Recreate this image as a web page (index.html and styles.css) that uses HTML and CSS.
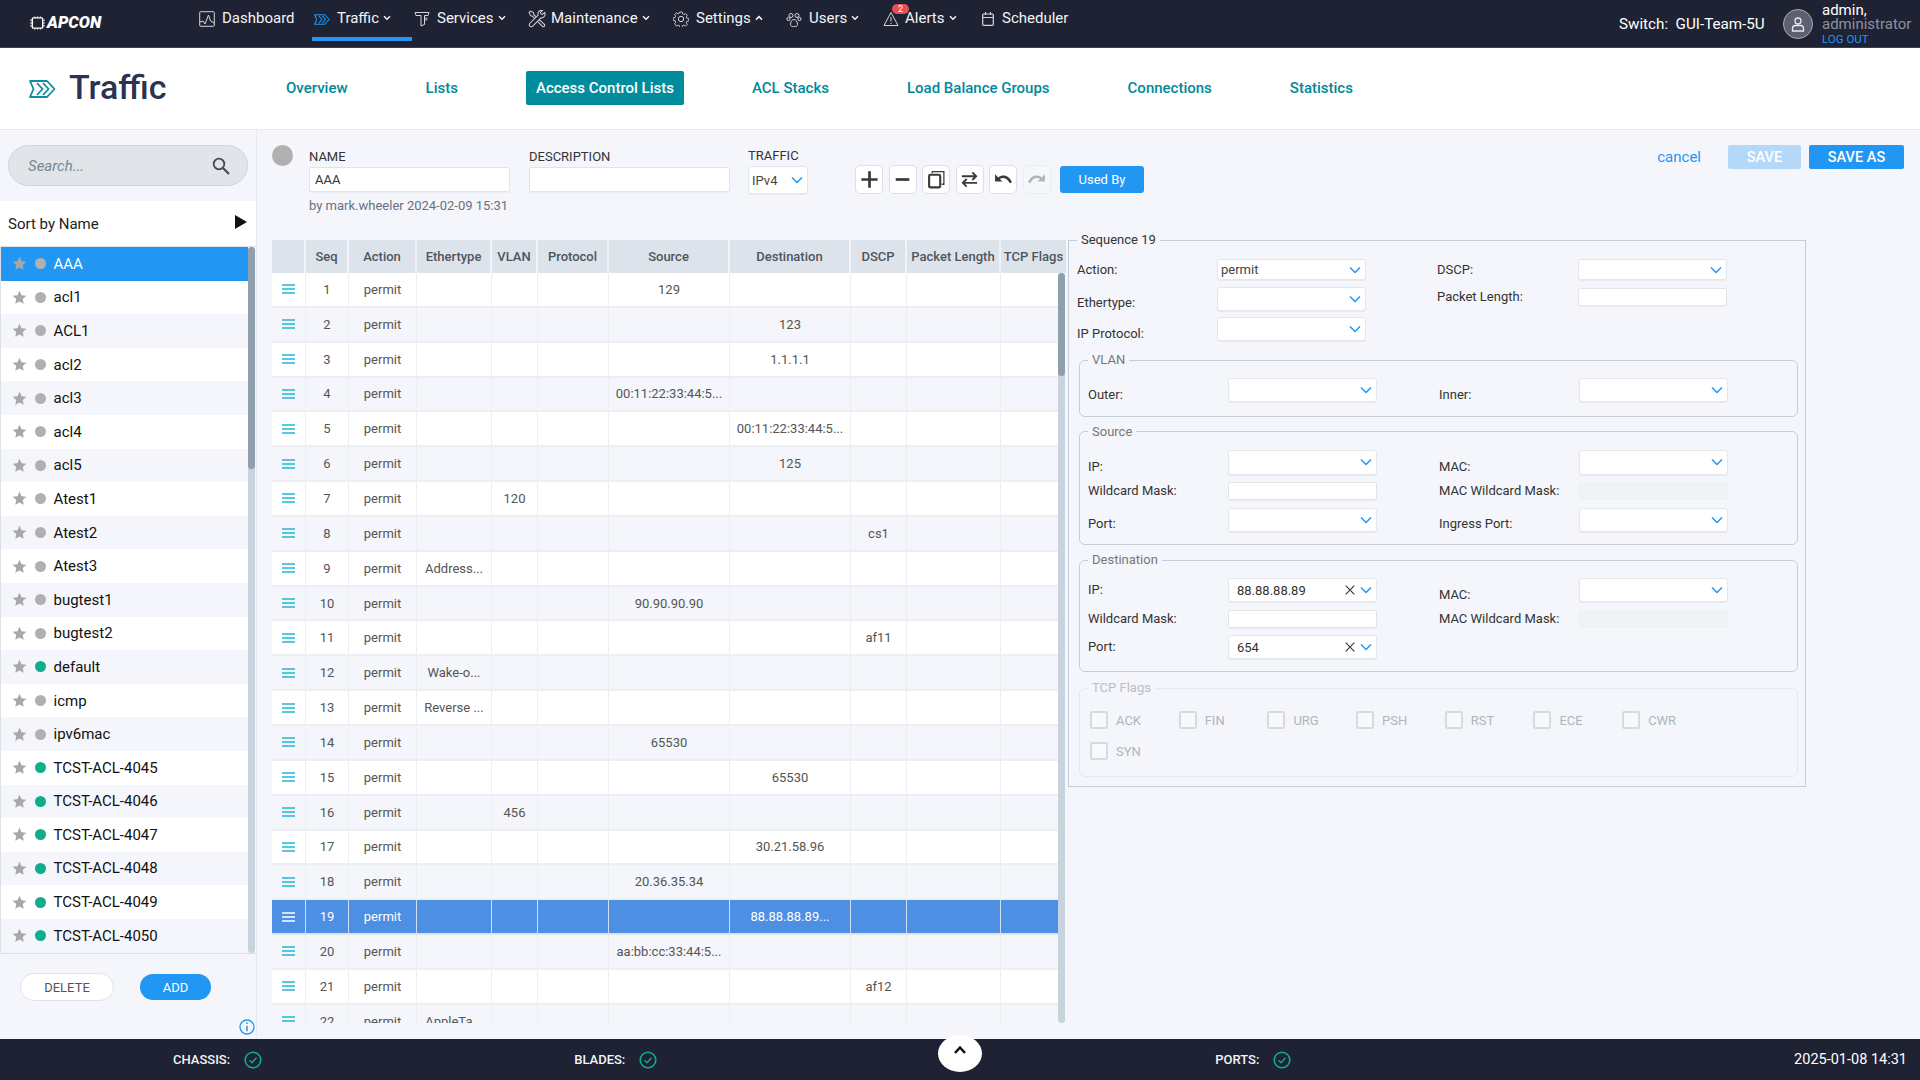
FILE: index.html
```html
<!DOCTYPE html>
<html lang="en">
<head>
<meta charset="utf-8">
<title>Traffic - Access Control Lists</title>
<link rel="stylesheet" href="styles.css">
</head>
<body>
<svg class="defs" aria-hidden="true">
  <symbol id="chev" viewBox="0 0 12 8"><path d="M1 1.500l5 5 5-5" fill="none" stroke="currentColor" stroke-width="1.500"/></symbol>
  <symbol id="nchev" viewBox="0 0 8 6"><path d="M1 1.200l3 3 3-3" fill="none" stroke="currentColor" stroke-width="1.500"/></symbol>
  <symbol id="nchevup" viewBox="0 0 8 6"><path d="M1 4.600l3-3 3 3" fill="none" stroke="currentColor" stroke-width="1.500"/></symbol>
  <symbol id="star" viewBox="0 0 16 16"><path d="M8 .8l2.200 4.700 5.100.6-3.800 3.500 1 5.100L8 12.200 3.500 14.700l1-5.100L.7 6.100l5.100-.6z" fill="currentColor"/></symbol>
  <symbol id="grip" viewBox="0 0 13 10"><path d="M0 1h13M0 5h13M0 9h13" stroke="currentColor" stroke-width="1.500"/></symbol>
  <symbol id="traffic" viewBox="0 0 27 18"><path d="M1 1h17l7.500 8-7.500 8H1l3.500-8z" fill="none" stroke="currentColor" stroke-width="1.800" stroke-linejoin="round"/><path d="M8 3l5.500 6L8 15M14 3l5.500 6L14 15" fill="none" stroke="currentColor" stroke-width="1.800"/></symbol>
  <symbol id="ok" viewBox="0 0 18 18"><circle cx="9" cy="9" r="7.800" fill="none" stroke="currentColor" stroke-width="1.600"/><path d="M5.500 9.200l2.500 2.500 4.500-5" fill="none" stroke="currentColor" stroke-width="1.300"/></symbol>
  <symbol id="clear" viewBox="0 0 10 10"><path d="M.7.7l8.600 8.600M9.300.7L.7 9.300" fill="none" stroke="currentColor" stroke-width="1.100"/></symbol>
</svg>

<header class="topnav">
  <div class="logo">
    <svg class="chip" viewBox="0 0 16 14"><rect x="2.500" y="1.500" width="11" height="11" rx="1" fill="none" stroke="currentColor" stroke-width="1.500"/><path d="M0 4h2M0 7h2M0 10h2M14 4h2M14 7h2M14 10h2M5 0v1.500M8 0v1.500M11 0v1.500M5 12.500V14M8 12.500V14M11 12.500V14" stroke="currentColor"/></svg>
    <span>APCON</span>
  </div>
  <nav class="navitems">
    <a class="nitem n-dash"><svg class="nicon" viewBox="0 0 16 16"><rect x=".7" y=".7" width="14.600" height="14.600" rx="1" fill="none" stroke="currentColor"/><path d="M1 11l3-1 2 3 3.500-9 2 6 3.500 2" fill="none" stroke="currentColor"/></svg>Dashboard</a>
    <a class="nitem n-traffic active"><svg class="nicon blue"><use href="#traffic"/></svg>Traffic<svg class="nchev"><use href="#nchev"/></svg></a>
    <a class="nitem n-serv"><svg class="nicon" viewBox="0 0 16 16"><path d="M1 1.500h14l-1 3H10.500v9L7 15V4.500H2z" fill="none" stroke="currentColor"/><circle cx="12" cy="8" r="1.200" fill="none" stroke="currentColor" stroke-width=".8"/></svg>Services<svg class="nchev"><use href="#nchev"/></svg></a>
    <a class="nitem n-maint"><svg class="nicon" viewBox="0 0 16 16"><path d="M1 2.200L2.200 1l2.600 1.300.4 1.900L14.500 12.800a1.200 1.200 0 0 1-1.700 1.700L3.900 5.500 2.200 5z" fill="none" stroke="currentColor" stroke-width=".9"/><path d="M14.800 2.200l-2 1.700-1.300-.4-.4-1.300 1.800-1.900A3.300 3.300 0 0 0 9 4.500L1.500 12a1.800 1.800 0 0 0 2.500 2.500L11.500 7a3.300 3.300 0 0 0 3.300-4.800z" fill="#1f2233" stroke="currentColor" stroke-width=".9"/></svg>Maintenance<svg class="nchev"><use href="#nchev"/></svg></a>
    <a class="nitem n-set"><svg class="nicon" viewBox="0 0 16 16"><circle cx="8" cy="8" r="2.700" fill="none" stroke="currentColor"/><path d="M6.800 1h2.400l.4 1.900 1.300.6 1.700-1 1.700 1.700-1 1.700.6 1.300 1.900.4v2.400l-1.900.4-.6 1.300 1 1.700-1.700 1.700-1.700-1-1.300.6-.4 1.900H6.800l-.4-1.900-1.300-.6-1.700 1L1.700 12.700l1-1.700-.6-1.300L.2 9.300V6.900l1.900-.4.600-1.300-1-1.700 1.700-1.700 1.700 1 1.300-.6z" fill="none" stroke="currentColor" stroke-width=".9"/></svg>Settings<svg class="nchev"><use href="#nchevup"/></svg></a>
    <a class="nitem n-users"><svg class="nicon" viewBox="0 0 16 16"><circle cx="5" cy="4.500" r="2" fill="none" stroke="currentColor"/><circle cx="11" cy="4.500" r="2" fill="none" stroke="currentColor"/><circle cx="2.500" cy="8" r="1.600" fill="none" stroke="currentColor"/><circle cx="13.500" cy="8" r="1.600" fill="none" stroke="currentColor"/><path d="M4.500 13.500c0-3 1.500-5 3.500-5s3.500 2 3.500 5-7 3-7 0z" fill="none" stroke="currentColor"/></svg>Users<svg class="nchev"><use href="#nchev"/></svg></a>
    <a class="nitem n-alerts"><svg class="nicon" viewBox="0 0 16 16"><path d="M8 1.500L15 14.500H1z" fill="none" stroke="currentColor"/><path d="M8 6v4.500M8 11.800v1.200" stroke="currentColor"/></svg><span class="badge">2</span>Alerts<svg class="nchev"><use href="#nchev"/></svg></a>
    <a class="nitem n-sched"><svg class="nicon small" viewBox="0 0 12 14"><rect x=".7" y="2" width="10.600" height="11.300" rx="1" fill="none" stroke="currentColor" stroke-width="1.200"/><path d="M1 5.500h10M3.500 0v3M8.500 0v3" stroke="currentColor" stroke-width="1.200"/></svg>Scheduler</a>
  </nav>
  <div class="switch">Switch:  GUI-Team-5U</div>
  <div class="avatar"><svg viewBox="0 0 18 18"><circle cx="9" cy="6" r="3" fill="none" stroke="currentColor" stroke-width="1.300"/><path d="M3.500 16v-2.500c0-2 1.500-3 3-3h5c1.500 0 3 1 3 3V16z" fill="none" stroke="currentColor" stroke-width="1.300"/></svg></div>
  <div class="user"><div>admin,</div><div class="role">administrator</div><div class="logout">LOG OUT</div></div>
</header>

<section class="subnav">
  <div class="titlewrap"><svg class="titleicon"><use href="#traffic"/></svg><h1>Traffic</h1></div>
  <div class="tabs">
    <a class="tab">Overview</a>
    <a class="tab">Lists</a>
    <a class="tab current">Access Control Lists</a>
    <a class="tab">ACL Stacks</a>
    <a class="tab">Load Balance Groups</a>
    <a class="tab">Connections</a>
    <a class="tab">Statistics</a>
  </div>
</section>

<main class="main">
  <aside class="sidebar">
    <div class="search"><span>Search...</span><svg viewBox="0 0 18 18"><circle cx="7" cy="7" r="5.300" fill="none" stroke="currentColor" stroke-width="1.800"/><path d="M11 11l6 6" stroke="currentColor" stroke-width="2.200"/></svg></div>
    <div class="sort"><span>Sort by Name</span><i class="tri"></i></div>
    <div class="listwrap">
      <ul class="acl">
        <li class="sel"><svg class="star"><use href="#star"/></svg><b class="dot"></b>AAA</li>
        <li><svg class="star"><use href="#star"/></svg><b class="dot"></b>acl1</li>
        <li><svg class="star"><use href="#star"/></svg><b class="dot"></b>ACL1</li>
        <li><svg class="star"><use href="#star"/></svg><b class="dot"></b>acl2</li>
        <li><svg class="star"><use href="#star"/></svg><b class="dot"></b>acl3</li>
        <li><svg class="star"><use href="#star"/></svg><b class="dot"></b>acl4</li>
        <li><svg class="star"><use href="#star"/></svg><b class="dot"></b>acl5</li>
        <li><svg class="star"><use href="#star"/></svg><b class="dot"></b>Atest1</li>
        <li><svg class="star"><use href="#star"/></svg><b class="dot"></b>Atest2</li>
        <li><svg class="star"><use href="#star"/></svg><b class="dot"></b>Atest3</li>
        <li><svg class="star"><use href="#star"/></svg><b class="dot"></b>bugtest1</li>
        <li><svg class="star"><use href="#star"/></svg><b class="dot"></b>bugtest2</li>
        <li><svg class="star"><use href="#star"/></svg><b class="dot on"></b>default</li>
        <li><svg class="star"><use href="#star"/></svg><b class="dot"></b>icmp</li>
        <li><svg class="star"><use href="#star"/></svg><b class="dot"></b>ipv6mac</li>
        <li><svg class="star"><use href="#star"/></svg><b class="dot on"></b>TCST-ACL-4045</li>
        <li><svg class="star"><use href="#star"/></svg><b class="dot on"></b>TCST-ACL-4046</li>
        <li><svg class="star"><use href="#star"/></svg><b class="dot on"></b>TCST-ACL-4047</li>
        <li><svg class="star"><use href="#star"/></svg><b class="dot on"></b>TCST-ACL-4048</li>
        <li><svg class="star"><use href="#star"/></svg><b class="dot on"></b>TCST-ACL-4049</li>
        <li><svg class="star"><use href="#star"/></svg><b class="dot on"></b>TCST-ACL-4050</li>
      </ul>
      <div class="sbar side"><div class="thumb"></div></div>
    </div>
    <div class="sideactions"><button class="pill ghost">DELETE</button><button class="pill primary">ADD</button></div>
    <svg class="info" viewBox="0 0 16 16"><circle cx="8" cy="8" r="7" fill="none" stroke="currentColor" stroke-width="1.300"/><path d="M8 3.500v1.600M8 6.800v5.500" stroke="currentColor" stroke-width="1.500"/></svg>
  </aside>

  <div class="editor">
    <div class="formbar">
      <i class="statusdot"></i>
      <div class="field"><label>NAME</label><div class="input txt">AAA</div><div class="meta">by mark.wheeler 2024-02-09 15:31</div></div>
      <div class="field desc"><label>DESCRIPTION</label><div class="input txt"></div></div>
      <div class="field traffic"><label>TRAFFIC</label><div class="sel-box tall"><span>IPv4</span><svg class="chev"><use href="#chev"/></svg></div></div>
      <div class="tools">
        <button class="tool"><svg viewBox="0 0 14 14"><path d="M7 1v12M1 7h12" stroke="currentColor" stroke-width="2"/></svg></button>
        <button class="tool"><svg viewBox="0 0 14 14"><path d="M2 7h10" stroke="currentColor" stroke-width="2"/></svg></button>
        <button class="tool"><svg viewBox="0 0 18 18"><rect x="2" y="4.500" width="10.500" height="12" rx="1.200" fill="none" stroke="currentColor" stroke-width="2"/><path d="M5 3V1.500h11v12h-2" fill="none" stroke="currentColor" stroke-width="1.200"/></svg></button>
        <button class="tool"><svg viewBox="0 0 20 18"><path d="M2 5.500h15M13 1.500l4 4-4 4M18 12.500H3M7 8.500l-4 4 4 4" fill="none" stroke="currentColor" stroke-width="2"/></svg></button>
        <button class="tool"><svg viewBox="0 0 18 14"><path d="M1 2v7h7L5.500 6.500c3-2 7-1 9.500 4l2-.8C14.500 3 8.500 1.500 4 5z" fill="currentColor"/></svg></button>
        <button class="tool off"><svg viewBox="0 0 18 14"><path d="M17 2v7h-7l2.500-2.500c-3-2-7-1-9.500 4l-2-.8C3.500 3 9.500 1.500 14 5z" fill="currentColor"/></svg></button>
        <button class="usedby">Used By</button>
      </div>
      <div class="saves"><a class="cancel">cancel</a><button class="savebtn dim">SAVE</button><button class="savebtn">SAVE AS</button></div>
    </div>

    <div class="workarea">
      <div class="grid">
        <div class="tr th"><span></span><span>Seq</span><span>Action</span><span>Ethertype</span><span>VLAN</span><span>Protocol</span><span>Source</span><span>Destination</span><span>DSCP</span><span>Packet Length</span><span>TCP Flags</span></div>
        <div class="tbody">
          <div class="tr"><span class="g"><svg><use href="#grip"/></svg></span><span>1</span><span>permit</span><span></span><span></span><span></span><span>129</span><span></span><span></span><span></span><span></span></div>
          <div class="tr"><span class="g"><svg><use href="#grip"/></svg></span><span>2</span><span>permit</span><span></span><span></span><span></span><span></span><span>123</span><span></span><span></span><span></span></div>
          <div class="tr"><span class="g"><svg><use href="#grip"/></svg></span><span>3</span><span>permit</span><span></span><span></span><span></span><span></span><span>1.1.1.1</span><span></span><span></span><span></span></div>
          <div class="tr"><span class="g"><svg><use href="#grip"/></svg></span><span>4</span><span>permit</span><span></span><span></span><span></span><span>00:11:22:33:44:5...</span><span></span><span></span><span></span><span></span></div>
          <div class="tr"><span class="g"><svg><use href="#grip"/></svg></span><span>5</span><span>permit</span><span></span><span></span><span></span><span></span><span>00:11:22:33:44:5...</span><span></span><span></span><span></span></div>
          <div class="tr"><span class="g"><svg><use href="#grip"/></svg></span><span>6</span><span>permit</span><span></span><span></span><span></span><span></span><span>125</span><span></span><span></span><span></span></div>
          <div class="tr"><span class="g"><svg><use href="#grip"/></svg></span><span>7</span><span>permit</span><span></span><span>120</span><span></span><span></span><span></span><span></span><span></span><span></span></div>
          <div class="tr"><span class="g"><svg><use href="#grip"/></svg></span><span>8</span><span>permit</span><span></span><span></span><span></span><span></span><span></span><span>cs1</span><span></span><span></span></div>
          <div class="tr"><span class="g"><svg><use href="#grip"/></svg></span><span>9</span><span>permit</span><span>Address...</span><span></span><span></span><span></span><span></span><span></span><span></span><span></span></div>
          <div class="tr"><span class="g"><svg><use href="#grip"/></svg></span><span>10</span><span>permit</span><span></span><span></span><span></span><span>90.90.90.90</span><span></span><span></span><span></span><span></span></div>
          <div class="tr"><span class="g"><svg><use href="#grip"/></svg></span><span>11</span><span>permit</span><span></span><span></span><span></span><span></span><span></span><span>af11</span><span></span><span></span></div>
          <div class="tr"><span class="g"><svg><use href="#grip"/></svg></span><span>12</span><span>permit</span><span>Wake-o...</span><span></span><span></span><span></span><span></span><span></span><span></span><span></span></div>
          <div class="tr"><span class="g"><svg><use href="#grip"/></svg></span><span>13</span><span>permit</span><span>Reverse ...</span><span></span><span></span><span></span><span></span><span></span><span></span><span></span></div>
          <div class="tr"><span class="g"><svg><use href="#grip"/></svg></span><span>14</span><span>permit</span><span></span><span></span><span></span><span>65530</span><span></span><span></span><span></span><span></span></div>
          <div class="tr"><span class="g"><svg><use href="#grip"/></svg></span><span>15</span><span>permit</span><span></span><span></span><span></span><span></span><span>65530</span><span></span><span></span><span></span></div>
          <div class="tr"><span class="g"><svg><use href="#grip"/></svg></span><span>16</span><span>permit</span><span></span><span>456</span><span></span><span></span><span></span><span></span><span></span><span></span></div>
          <div class="tr"><span class="g"><svg><use href="#grip"/></svg></span><span>17</span><span>permit</span><span></span><span></span><span></span><span></span><span>30.21.58.96</span><span></span><span></span><span></span></div>
          <div class="tr"><span class="g"><svg><use href="#grip"/></svg></span><span>18</span><span>permit</span><span></span><span></span><span></span><span>20.36.35.34</span><span></span><span></span><span></span><span></span></div>
          <div class="tr picked"><span class="g"><svg><use href="#grip"/></svg></span><span>19</span><span>permit</span><span></span><span></span><span></span><span></span><span>88.88.88.89...</span><span></span><span></span><span></span></div>
          <div class="tr"><span class="g"><svg><use href="#grip"/></svg></span><span>20</span><span>permit</span><span></span><span></span><span></span><span>aa:bb:cc:33:44:5...</span><span></span><span></span><span></span><span></span></div>
          <div class="tr"><span class="g"><svg><use href="#grip"/></svg></span><span>21</span><span>permit</span><span></span><span></span><span></span><span></span><span></span><span>af12</span><span></span><span></span></div>
          <div class="tr"><span class="g"><svg><use href="#grip"/></svg></span><span>22</span><span>permit</span><span>AppleTa...</span><span></span><span></span><span></span><span></span><span></span><span></span><span></span></div>
          <div class="sbar body"><div class="thumb"></div></div>
        </div>
      </div>

      <fieldset class="seq">
        <legend>Sequence 19</legend>
        <div class="seqgrid">
          <span class="lb">Action:</span><div class="sel-box"><span>permit</span><svg class="chev"><use href="#chev"/></svg></div><span></span>
          <span class="lb">DSCP:</span><div class="sel-box"><svg class="chev"><use href="#chev"/></svg></div>
          <span class="lb low">Ethertype:</span><div class="sel-box"><svg class="chev"><use href="#chev"/></svg></div><span></span>
          <span class="lb top">Packet Length:</span><div class="input thin"></div>
          <span class="lb low">IP Protocol:</span><div class="sel-box"><svg class="chev"><use href="#chev"/></svg></div>
        </div>

        <fieldset class="grp g-vlan">
          <legend>VLAN</legend>
          <div class="grpgrid">
            <span class="lb low">Outer:</span><div class="sel-box"><svg class="chev"><use href="#chev"/></svg></div><span></span>
            <span class="lb low">Inner:</span><div class="sel-box"><svg class="chev"><use href="#chev"/></svg></div>
          </div>
        </fieldset>

        <fieldset class="grp g-src">
          <legend>Source</legend>
          <div class="grpgrid three">
            <span class="lb low">IP:</span><div class="sel-box"><svg class="chev"><use href="#chev"/></svg></div><span></span>
            <span class="lb low">MAC:</span><div class="sel-box"><svg class="chev"><use href="#chev"/></svg></div>
            <span class="lb">Wildcard Mask:</span><div class="input"></div><span></span>
            <span class="lb">MAC Wildcard Mask:</span><div class="input disabled"></div>
            <span class="lb low">Port:</span><div class="sel-box"><svg class="chev"><use href="#chev"/></svg></div><span></span>
            <span class="lb low">Ingress Port:</span><div class="sel-box"><svg class="chev"><use href="#chev"/></svg></div>
          </div>
        </fieldset>

        <fieldset class="grp g-dst">
          <legend>Destination</legend>
          <div class="grpgrid three dst">
            <span class="lb">IP:</span><div class="sel-box val"><span>88.88.88.89</span><svg class="clr"><use href="#clear"/></svg><svg class="chev"><use href="#chev"/></svg></div><span></span>
            <span class="lb low">MAC:</span><div class="sel-box"><svg class="chev"><use href="#chev"/></svg></div>
            <span class="lb">Wildcard Mask:</span><div class="input"></div><span></span>
            <span class="lb">MAC Wildcard Mask:</span><div class="input disabled"></div>
            <span class="lb">Port:</span><div class="sel-box val"><span>654</span><svg class="clr"><use href="#clear"/></svg><svg class="chev"><use href="#chev"/></svg></div>
          </div>
        </fieldset>

        <fieldset class="grp g-tcp">
          <legend>TCP Flags</legend>
          <div class="flags">
            <label class="flag"><i></i>ACK</label><label class="flag"><i></i>FIN</label><label class="flag"><i></i>URG</label><label class="flag"><i></i>PSH</label><label class="flag"><i></i>RST</label><label class="flag"><i></i>ECE</label><label class="flag"><i></i>CWR</label><label class="flag"><i></i>SYN</label>
          </div>
        </fieldset>
      </fieldset>
    </div>
  </div>
</main>

<footer class="status">
  <div class="st st-ch">CHASSIS:<svg><use href="#ok"/></svg></div>
  <div class="st st-bl">BLADES:<svg><use href="#ok"/></svg></div>
  <div class="st st-po">PORTS:<svg><use href="#ok"/></svg></div>
  <div class="clock">2025-01-08 14:31</div>
  <div class="lift"><svg viewBox="0 0 14 10"><path d="M2 8l5-5.500L12 8" fill="none" stroke="currentColor" stroke-width="2.500"/></svg></div>
</footer>
</body>
</html>
```
FILE: styles.css
```css
* { box-sizing: border-box; }
html, body { height: 100%; }
body {
  margin: 0;
  height: 1080px;
  overflow: hidden;
  display: flex;
  flex-direction: column;
  background: #f4f6fb;
  color: #333;
  font-family: Roboto, "Liberation Sans", sans-serif;
  font-size: 13px;
}
.defs { width: 0; height: 0; position: absolute; }
button { font-family: inherit; cursor: pointer; }

/* top navigation */
.topnav {
  flex: 0 0 48px;
  display: flex;
  align-items: flex-start;
  background: #1f2233;
  border-bottom: 1px solid #3b3e4d;
  color: #fff;
  position: relative;
}
.logo {
  width: 199px;
  padding: 16px 0 0 30px;
  display: flex;
  gap: 2px;
  font-weight: 900;
  font-style: italic;
  font-size: 16.500px;
  line-height: 14px;
  color: #fff;
}
.chip { width: 15px; height: 14px; }
.navitems { display: flex; width: 900px; }
.nitem {
  position: relative;
  height: 41px;
  display: flex;
  align-items: flex-start;
  padding-top: 10px;
  font-size: 15px;
  line-height: 17px;
  color: #f3f4f7;
  white-space: nowrap;
}
.nicon { width: 16px; height: 16px; margin: 1px 7px 0 0; color: #d3d6dc; flex: none; }
.nicon.small { width: 12px; height: 14px; margin: 2px 8px 0 0; }
.nicon.blue { color: #2196f3; height: 11px; margin-top: 4px; }
.nchev { width: 8px; height: 6px; margin: 5px 0 0 4px; color: #f3f4f7; flex: none; }
.n-dash { width: 113px; }
.n-traffic { width: 100px; padding-left: 2px; border-bottom: 4px solid #2196f3; }
.n-serv { width: 116px; padding-left: 2px; }
.n-maint { width: 145px; }
.n-maint .nicon { width: 18px; height: 18px; margin: 0 5px 0 0; }
.n-set { width: 113px; }
.n-users { width: 97px; }
.n-alerts { width: 99px; }
.n-sched { width: 90px; }
.n-alerts .nicon { margin-right: 6px; }
.badge {
  position: absolute;
  left: 9px;
  top: 4px;
  width: 17px;
  height: 10px;
  border-radius: 5px;
  background: #e8504f;
  color: #fff;
  font-size: 9px;
  line-height: 10px;
  text-align: center;
}
.switch {
  margin-left: 520px;
  padding-top: 15px;
  width: 164px;
  font-size: 15.200px;
  line-height: 18px;
  white-space: pre;
}
.avatar {
  width: 30px;
  height: 30px;
  margin-top: 9px;
  border-radius: 50%;
  background: #5c6070;
  border: 1px solid #a9acb6;
  color: #e8e9ed;
  padding: 5px;
}
.avatar svg { display: block; width: 18px; height: 18px; }
.user {
  margin-left: 9px;
  padding-top: 3px;
  font-size: 15px;
  line-height: 14px;
  white-space: nowrap;
}
.role { color: #8d919e; line-height: 15px; }
.logout { color: #2196f3; font-size: 11.500px; line-height: 12px; margin-top: 1px; }

/* sub navigation */
.subnav {
  flex: 0 0 82px;
  display: flex;
  align-items: center;
  background: #fff;
  border-bottom: 1px solid #e6e8ec;
}
.titlewrap { width: 276px; padding-left: 29px; display: flex; align-items: center; gap: 13px; }
.titleicon { width: 27px; height: 18px; color: #0e8ca0; }
.titlewrap h1 { margin: -4px 0 0; font-size: 34px; font-weight: 500; line-height: 40px; color: #2c3350; }
.tabs { display: flex; gap: 58px; margin-top: -2px; }
.tab {
  height: 34px;
  padding: 0 10px;
  line-height: 34px;
  font-size: 15px;
  font-weight: 500;
  color: #00899a;
  white-space: nowrap;
  border-radius: 2px;
}
.tab.current { background: #008c9c; color: #fff; }

/* main */
.main { flex: 1 1 auto; min-height: 0; display: flex; }
.sidebar {
  flex: 0 0 257px;
  display: flex;
  flex-direction: column;
  border-right: 1px solid #e8ebf0;
  padding-top: 15px;
}
.search {
  height: 41px;
  margin: 0 8px;
  width: 240px;
  flex: none;
  border-radius: 21px;
  background: #e1e5ea;
  border: 1px solid #cfd5db;
  display: flex;
  align-items: center;
  justify-content: space-between;
  padding: 0 17px 0 19px;
  font-size: 15px;
  font-style: italic;
  color: #7a8694;
}
.search svg { width: 18px; height: 18px; color: #444b55; }
.sort {
  flex: 0 0 45px;
  margin-top: 15px;
  background: #fff;
  display: flex;
  align-items: center;
  justify-content: space-between;
  padding: 0 9px 0 8px;
  font-size: 15px;
  color: #222;
}
.sort span { margin-top: 1px; }
.tri { width: 0; height: 0; border-left: 12px solid #111; border-top: 7px solid transparent; border-bottom: 7px solid transparent; margin-top: -3px; }
.listwrap {
  position: relative;
  height: 708px;
  flex: none;
  border-left: 1px solid #dde1e6;
  border-top: 1px solid #dde1e6;
  border-bottom: 1px solid #dde1e6;
  overflow: hidden;
}
.acl { list-style: none; margin: 0; padding: 0; width: 247px; }
.acl li {
  height: 33.600px;
  display: flex;
  align-items: center;
  padding-left: 11px;
  font-size: 15px;
  color: #111;
  background: #fff;
}
.acl li:nth-child(odd) { background: #f4f6fb; }
.acl li.sel { background: #2196f3; color: #fff; }
.star { width: 15px; height: 15px; color: #a8a8a8; flex: none; }
.dot { width: 11px; height: 11px; border-radius: 50%; background: #b0b0b0; margin: 0 7.500px 0 8px; flex: none; }
.dot.on { background: #10ad8a; }
.sbar { position: absolute; background: #c8d3dd; border-radius: 4px; width: 7px; top: 0; bottom: 0; }
.sbar.side { left: 247px; }
.sbar.side .thumb { height: 222px; }
.sbar.body { left: 786px; }
.sbar.body .thumb { height: 103px; }
.thumb { background: #8f9fae; border-radius: 4px; width: 100%; }
.sideactions { display: flex; align-items: center; gap: 26px; padding-left: 20px; margin-top: 19px; flex: none; }
.pill { border-radius: 15px; font-size: 13px; padding: 0; }
.ghost { width: 94px; height: 28px; background: #fff; border: 1px solid #dfe2e6; color: #555; }
.primary { width: 71px; height: 26px; background: #2196f3; border: 0; color: #fff; }
.info { width: 16px; height: 16px; color: #2196f3; margin: auto 1px 4px auto; flex: none; }

/* editor */
.editor { flex: 1 1 auto; min-width: 0; display: flex; flex-direction: column; }
.formbar { flex: 0 0 102px; display: flex; align-items: flex-start; padding: 15px 16px 0 15px; }
.statusdot { width: 21px; height: 21px; border-radius: 50%; background: #b0b0b0; margin-right: 16px; flex: none; }
.field { width: 201px; margin-right: 19px; flex: none; }
.field.desc { margin-right: 18px; }
.field label { display: block; font-size: 13px; line-height: 16px; height: 22px; padding-top: 4px; color: #333; }
.input {
  background: #fff;
  border: 1px solid #e1e5ea;
  border-radius: 2px;
  box-shadow: 0 1px 1px rgba(0, 0, 0, 0.04);
}
.input.txt { height: 25px; line-height: 23px; padding-left: 5px; }
.input.disabled { background: #f0f2f6; border-color: #eef0f4; box-shadow: none; }
.meta { margin-top: 6px; font-size: 13px; color: #6a7080; white-space: nowrap; line-height: 16px; }
.traffic { width: 60px; margin-right: 47px; }
.traffic label { height: 21px; padding-top: 3px; }
.sel-box {
  position: relative;
  display: flex;
  align-items: center;
  background: #fff;
  border: 1px solid #e3e7ec;
  border-radius: 3px;
  box-shadow: 0 1px 1px rgba(0, 0, 0, 0.05);
  padding-left: 3px;
  font-size: 13px;
  color: #444;
}
.sel-box.tall { height: 28px; }
.chev { position: absolute; right: 4px; top: 50%; margin-top: -4px; width: 12px; height: 8px; color: #2196f3; }
.val { padding-left: 8px; color: #333; }
.clr { position: absolute; right: 21px; top: 50%; margin-top: -5px; width: 10px; height: 10px; color: #333; }
.tools { display: flex; gap: 5.500px; align-items: flex-start; padding-top: 20px; }
.tool {
  width: 28px;
  height: 29px;
  padding: 0;
  display: flex;
  align-items: center;
  justify-content: center;
  background: #fff;
  border: 1px solid #dcdfe6;
  border-radius: 5px;
  color: #3a3a3a;
}
.tool svg { width: 19px; height: 19px; }
.tool.off { background: #f6f7fa; border-color: #ebedf1; color: #b0b4ba; }
.usedby {
  margin: 1px 0 0 4px;
  width: 84px;
  height: 27px;
  background: #2196f3;
  color: #fff;
  border: 0;
  border-radius: 3px;
  font-size: 13px;
}
.saves { margin-left: auto; display: flex; align-items: flex-start; gap: 8px; }
.cancel { color: #2196f3; font-size: 15px; line-height: 24px; margin-right: 19px; }
.savebtn {
  width: 95px;
  height: 24px;
  padding: 0;
  background: #2196f3;
  color: #fff;
  border: 0;
  border-radius: 2px;
  font-size: 14.500px;
  font-weight: 500;
}
.savebtn.dim { width: 73px; background: #b3d8f8; }

.workarea { flex: 1 1 auto; min-height: 0; display: flex; align-items: flex-start; padding-left: 15px; }
.grid { margin-top: 8px; width: 794px; flex: none; height: 783px; overflow: hidden; }
.tr {
  display: grid;
  grid-template-columns: 34px 43px 68px 75px 46px 71px 121px 121px 56px 94px 1fr;
  height: 34.850px;
  background: #fff;
  border-bottom: 2px solid #eceef2;
  color: #555;
  font-size: 13px;
  width: 786px;
}
.tr > span {
  display: flex;
  align-items: center;
  justify-content: center;
  border-right: 1px solid #eceef2;
  white-space: nowrap;
}
.tr > span:last-child { border-right: 0; }
.tbody { position: relative; height: 750px; overflow: hidden; }
.tbody .tr:nth-child(even) { background: #f4f6fb; }
.tr.th {
  width: 794px;
  height: 33px;
  background: #dde3ea;
  border-bottom: 0;
  font-weight: 500;
  color: #4d5560;
  grid-template-columns: 34px 43px 68px 75px 46px 71px 121px 121px 56px 94px 65px;
}
.th > span { border-right: 2px solid #f0f3f7; }
.g svg { width: 13px; height: 10px; color: #25b5d6; }
.tbody .tr.picked { background: #4c8fe3; color: #fff; border-bottom-color: #dfe4ea; }
.picked > span { border-right-color: #cfe0f6; }
.picked .g svg { color: #fff; }

.seq {
  margin: 0 0 0 2px;
  width: 738px;
  height: 555px;
  padding: 0 8px;
  border: 1px solid #c5ced6;
  min-width: 0;
}
.seq > legend { padding: 0 4px; font-size: 13px; line-height: 16px; color: #333; }
.seqgrid {
  display: grid;
  grid-template-columns: 140px 149px 71px 141px 149px;
  grid-template-rows: 21px 24px 24px;
  row-gap: 6.500px;
  margin-top: 11px;
}
.lb { align-self: center; line-height: 16px; color: #333; white-space: nowrap; }
.lb.low { padding-top: 9px; }
.lb.top { align-self: start; margin-top: 1px; line-height: 18px; }
.input.thin { height: 18px; margin-top: 1px; }

.grp {
  margin: 11px 0 0 2px;
  width: 719px;
  min-width: 0;
  padding: 0 8px;
  border: 1px solid #c5ced6;
  border-radius: 6px;
}
.grp > legend { padding: 0 4px; line-height: 16px; color: #777; font-size: 13px; }
.grpgrid {
  display: grid;
  grid-template-columns: 140px 149px 62px 140px 149px;
  grid-template-rows: 24px;
  margin-top: 10px;
}
.grpgrid.three { grid-template-rows: 25px 18px 24px; row-gap: 7.500px; }
.grpgrid.dst { grid-template-rows: 24px 18px 24px; }
.g-vlan { height: 65px; }
.g-src { margin-top: 6.500px; height: 121px; }
.g-dst { margin-top: 7.500px; height: 120px; }
.g-tcp { margin-top: 8px; height: 97px; border-color: #e6e9ee; }
.g-tcp > legend { color: #b9bec6; }
.flags { display: flex; flex-wrap: wrap; padding: 15px 0 0 2px; row-gap: 13px; }
.flag { width: 88.700px; display: flex; align-items: center; height: 18px; color: #b0b5bc; font-size: 13px; }
.flag i { width: 18px; height: 18px; margin-right: 8px; border: 2px solid #d5dbe1; border-radius: 2px; background: #f8f9fc; }

/* status bar */
.status {
  flex: 0 0 41px;
  position: relative;
  display: flex;
  align-items: center;
  background: #1f2233;
  color: #fff;
  padding: 0 13px 0 173px;
}
.st { display: flex; align-items: center; font-size: 13px; font-weight: 500; color: #f3f4f7; }
.st svg { width: 18px; height: 18px; margin-left: 14px; color: #10ad8a; }
.st-bl { margin-left: 312px; }
.st-po { margin-left: 558px; }
.clock { margin-left: auto; font-size: 14.500px; }
.lift {
  position: absolute;
  left: calc(50% - 22px);
  top: -4px;
  width: 44px;
  height: 37px;
  border-radius: 50%;
  background: #fff;
  color: #111;
  display: flex;
  align-items: center;
  justify-content: center;
}
.lift svg { width: 14px; height: 10px; margin-top: -8px; }
```
